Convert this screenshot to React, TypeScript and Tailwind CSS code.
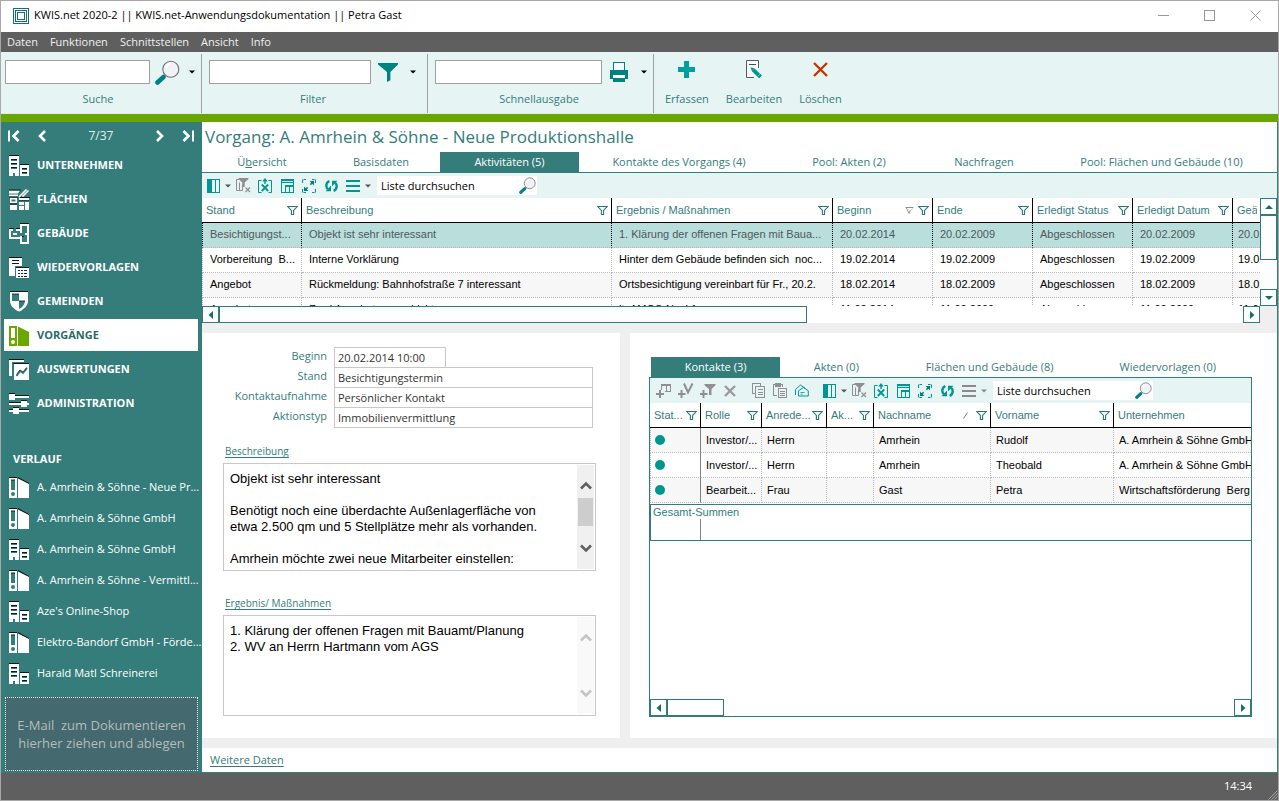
import React from "react";

type IconProps = { className?: string };

const TEAL = "#009694";
const DEEP = "#347d7b";
const GREY = "#8f8f8f";

/* ---------- Icons ---------- */

function AppLogo() {
  return (
    <svg width="16" height="16" viewBox="0 0 16 16" fill="none" stroke="#14706e" shapeRendering="crispEdges">
      <rect x="0.5" y="0.5" width="15" height="15" />
      <rect x="2.5" y="2.5" width="11" height="11" />
      <rect x="4.5" y="4.5" width="7" height="7" />
    </svg>
  );
}

function Magnifier({ className = "size-[25px]" }: IconProps) {
  return (
    <svg className={className} viewBox="0 0 25 25">
      <path d="M2.5 22.5 L8.5 17" stroke="#007f86" strokeWidth="4.6" strokeLinecap="round" />
      <circle cx="15.8" cy="9.2" r="8" fill="#f0f2f8" stroke="#707070" strokeWidth="1.1" />
      <path d="M11 8a5 5 0 0 1 4-4" stroke="#ffffff" strokeWidth="1.6" fill="none" />
    </svg>
  );
}

function Caret({ color = "#000000" }: { color?: string }) {
  return (
    <svg width="6" height="4" viewBox="0 0 6 4">
      <path d="M0 0.4h6L3 3.6z" fill={color} />
    </svg>
  );
}

function Funnel() {
  return (
    <svg width="20" height="19" viewBox="0 0 20 19">
      <path d="M0 0h20v1.6l-7.6 7.4v8.2L9 19V9L0 1.6z" fill="#00827f" />
    </svg>
  );
}

function Printer() {
  return (
    <svg width="18" height="20" viewBox="0 0 18 20" shapeRendering="crispEdges">
      <rect x="3.5" y="0.5" width="11" height="9" fill="#f2fbfb" stroke="#00827f" />
      <path d="M0 8h18v9h-3v-4H3v4H0z" fill="#00827f" />
      <rect x="3" y="13" width="12" height="3" fill="#ffffff" />
      <rect x="3" y="16" width="12" height="4" fill="#00827f" />
      <path d="M4 8h10v1H4z" fill="#00827f" />
    </svg>
  );
}

function Plus() {
  return (
    <svg width="17" height="17" viewBox="0 0 17 17" shapeRendering="crispEdges">
      <path d="M6 0h5v6h6v5h-6v6H6v-6H0V6h6z" fill="#00a09c" />
    </svg>
  );
}

function EditDoc() {
  return (
    <svg width="17" height="19" viewBox="0 0 17 19">
      <path d="M12.5 8V0.5H0.5v17H8" fill="#f7fdfd" stroke="#5a5a5a" />
      <path d="M3 4.5h7" stroke="#4a4a4a" />
      <path d="M4.5 7.2l4.2 1.4-2.6 2.8z" fill="#00968f" />
      <path d="M7.3 10l6.2 5.8" stroke="#00968f" strokeWidth="3.8" />
      <path d="M13 15.4l1.6 1.5" stroke="#00968f" strokeWidth="4" />
      <path d="M11.6 16.4l3-3" stroke="#c9eceb" strokeWidth="0.6" />
    </svg>
  );
}

function Cross() {
  return (
    <svg width="15" height="15" viewBox="0 0 15 15">
      <path d="M1 1l13 13M14 1L1 14" stroke="#c53500" strokeWidth="2.4" />
    </svg>
  );
}

function FilterGlyph() {
  return (
    <svg width="11" height="9" viewBox="0 0 11 9" className="shrink-0">
      <path d="M0.8 0.5h9.4L6.6 4.4v4.1H4.4V4.4z" fill="none" stroke="#2a7876" strokeWidth="1.1" />
    </svg>
  );
}

function ColumnsIcon() {
  return (
    <svg width="13" height="14" viewBox="0 0 13 14" shapeRendering="crispEdges">
      <rect x="0.5" y="0.5" width="12" height="13" fill="#e9f8f8" stroke={TEAL} />
      <rect width="5" height="14" fill={TEAL} />
      <path d="M8.5 0v14" stroke={TEAL} />
    </svg>
  );
}

function ClearFilterIcon() {
  return (
    <svg width="16" height="15" viewBox="0 0 16 15">
      <path d="M4 1.5H1.5v11h3v-8M4.5 12.5h3v-6" fill="none" stroke={GREY} />
      <path d="M3.5 0h10v1l-3.8 3.6V9H7.3V4.6L3.5 1z" fill={GREY} />
      <path d="M10.5 9.5l4.5 4.5M15 9.5L10.5 14" stroke={GREY} strokeWidth="1.2" />
    </svg>
  );
}

function ExportIcon() {
  return (
    <svg width="14" height="15" viewBox="0 0 14 15">
      <path d="M3.5 2.5h-3v12h3M10.5 2.5h3v12h-3" fill="none" stroke={TEAL} />
      <path d="M7 0l2.8 3.4H7.7V6H6.3V3.4H4.2z" fill={TEAL} />
      <path d="M3.8 6.5l6.4 6.5M10.2 6.5L3.8 13" stroke={TEAL} strokeWidth="1.8" />
    </svg>
  );
}

function LayoutIcon() {
  return (
    <svg width="13" height="14" viewBox="0 0 13 14" shapeRendering="crispEdges">
      <path d="M0.5 0v13.5H4" fill="none" stroke={TEAL} />
      <rect width="13" height="4" fill={TEAL} />
      <path d="M1 2.5h11" stroke="#bfe6e5" />
      <rect x="4.5" y="6.5" width="8" height="7" fill="none" stroke={TEAL} />
      <rect x="4" y="6" width="9" height="2" fill={TEAL} />
      <path d="M8.5 7v7M12.5 4v3" stroke={TEAL} />
    </svg>
  );
}

function ExpandIcon() {
  return (
    <svg width="14" height="14" viewBox="0 0 14 14">
      <path d="M0.5 4V0.5H4M13.5 10v3.5H10M0.5 10v3.5H4M13.5 4V0.5H10" fill="none" stroke={TEAL} strokeWidth="1.2" strokeDasharray="3.5 1" />
      <path d="M12 2v4.6L7.6 2zM2 12V7.4L6.4 12z" fill="#007f7c" />
      <path d="M11 3L8.4 5.6M3 11l2.6-2.6" stroke="#007f7c" strokeWidth="1.5" />
    </svg>
  );
}

function RefreshIcon() {
  return (
    <svg width="13" height="12" viewBox="0 0 13 12">
      <path d="M4.4 1.2C0.8 2.6 0.4 7.2 3 9.4" fill="none" stroke={TEAL} strokeWidth="2.4" />
      <path d="M0.6 11.2h5.4V5.4z" fill={TEAL} />
      <path d="M8.6 10.8c3.6-1.4 4-6 1.4-8.2" fill="none" stroke={TEAL} strokeWidth="2.4" />
      <path d="M12.4 0.8H7v5.8z" fill={TEAL} />
    </svg>
  );
}

function LinesIcon({ color }: { color: string }) {
  return (
    <svg width="14" height="14" viewBox="0 0 14 14" shapeRendering="crispEdges">
      <path d="M0 1h14v2H0zM0 6h14v2H0zM0 11h14v2H0z" fill={color} />
    </svg>
  );
}

function AddTableIcon() {
  return (
    <svg width="16" height="15" viewBox="0 0 16 15" shapeRendering="crispEdges">
      <path d="M5.5 7V1.5h9v7H9M5 2.5h10M10.5 1v8" fill="none" stroke={GREY} />
      <path d="M3 7h2v3h3v2H5v3H3v-3H0v-2h3z" fill={GREY} />
    </svg>
  );
}

function AddVIcon() {
  return (
    <svg width="16" height="15" viewBox="0 0 16 15">
      <path d="M6 0.5l4 9 4.5-9" fill="none" stroke={GREY} strokeWidth="2" />
      <path d="M2.5 7h2v3h3v2h-3v3h-2v-3H0v-2h2.5z" fill={GREY} />
    </svg>
  );
}

function AddFilterIcon() {
  return (
    <svg width="16" height="15" viewBox="0 0 16 15">
      <path d="M4.5 1h11v1.2l-4 3.8v6H9V6L4.5 2.2z" fill={GREY} />
      <path d="M2.5 7h2v3h3v2h-3v3h-2v-3H0v-2h2.5z" fill={GREY} />
    </svg>
  );
}

function DeleteIcon() {
  return (
    <svg width="12" height="12" viewBox="0 0 12 12">
      <path d="M1 1l10 10M11 1L1 11" stroke="#9a9a9a" strokeWidth="2.4" />
    </svg>
  );
}

function CopyIcon() {
  return (
    <svg width="13" height="15" viewBox="0 0 13 15" shapeRendering="crispEdges" fill="none" stroke={GREY}>
      <path d="M2.5 10.5h-2v-10h8v2" />
      <rect x="3.5" y="3.5" width="9" height="11" />
      <path d="M6 6.5h5M6 9.5h5M6 11.5h5" />
    </svg>
  );
}

function PasteIcon() {
  return (
    <svg width="14" height="15" viewBox="0 0 14 15" shapeRendering="crispEdges">
      <path d="M4 12.5H0.5v-11h9V4" fill="none" stroke={GREY} />
      <rect x="2" y="0" width="6" height="4" fill={GREY} />
      <rect x="5.5" y="5.5" width="8" height="9" fill="#e6f4f4" stroke={GREY} />
      <path d="M7 8.5h5M7 10.5h5M7 12.5h5" stroke={GREY} />
    </svg>
  );
}

function MailIcon() {
  return (
    <svg width="14" height="13" viewBox="0 0 14 13" fill="none" stroke={TEAL}>
      <path d="M0.5 11V5.5L5.5 1l5 3.5" />
      <path d="M3.5 12V6.8L8.5 3.4l4.8 3.4V12z" />
      <path d="M5.5 8.5h4M5.5 10.2h2" strokeWidth="0.8" />
    </svg>
  );
}

function CompanyIcon() {
  return (
    <svg width="20" height="21" viewBox="0 0 20 21" shapeRendering="crispEdges">
      <path d="M0 0h10v1H0zM11 9h9v1h-9z" fill="#101818" />
      <path d="M0 1h10v20H6v-3H4v3H0zM11 10h9v11h-9z" fill="#ffffff" />
      <path d="M2 4h6v1H2zM2 8h6v1H2zM2 12h6v1H2zM13 13h5v1h-5zM13 17h5v1h-5z" fill="#101818" />
      <path d="M2 5h6v1H2zM2 9h6v1H2zM2 13h6v1H2zM13 14h5v1h-5zM13 18h5v1h-5z" fill={DEEP} />
    </svg>
  );
}

function AreaIcon() {
  return (
    <svg width="21" height="21" viewBox="0 0 21 21">
      <path d="M0 1.5h11l-2 3H0zM0 5.5h9v2H0zM1 9h7v5H1zM10 9h10v2H10zM10 12.5h10v8.5H10zM1 16h7v5H1z" fill="#ffffff" />
      <path d="M0 1h12M0 8h9M11 8.5h10M1 15h7M10 12h10" stroke="#101818" />
      <path d="M2.5 10.5h4v2h-4z" fill={DEEP} />
      <path d="M10 8L17.5 0.5M13.5 7.5l6-6" stroke="#ffffff" strokeWidth="1.6" />
      <path d="M15.5 13v8M10 16.5h5" stroke={DEEP} />
    </svg>
  );
}

function BuildingIcon() {
  return (
    <svg width="20" height="21" viewBox="0 0 20 21" shapeRendering="crispEdges" fill="none">
      <path d="M11 0.5h9M0 5.5h5M7 5.5h4M11 13.5h4" stroke="#101818" />
      <path d="M4 7H1v8h11v5h7V2h-7v5H7M12 7v3M8 11H4M16 11h3M12 13v3" stroke="#ffffff" strokeWidth="2" />
    </svg>
  );
}

function FollowUpIcon() {
  return (
    <svg width="20" height="21" viewBox="0 0 20 21" shapeRendering="crispEdges">
      <path d="M0 0h13v1H0z" fill="#101818" />
      <path d="M0 1h13v8H6v10H0zM7 11h13v10H7z" fill="#ffffff" />
      <path d="M7 10h13v1H7zM3 3h7v1H3zM3 6h7v1H3z" fill="#101818" />
      <path d="M9 13h2v1H9zM12 13h2v1h-2zM15 13h3v1h-3zM9 16h2v1H9zM12 16h2v1h-2zM15 16h3v1h-3zM9 19h2v1H9zM12 19h2v1h-2zM15 19h3v1h-3z" fill="#0d3433" />
    </svg>
  );
}

function ShieldIcon() {
  return (
    <svg width="20" height="21" viewBox="0 0 20 21">
      <path d="M1 0h18v1H1z" fill="#101818" />
      <path d="M1 1h18v9c0 5-5 9-9 10.6C6 19 1 15 1 10z" fill="#ffffff" />
      <path d="M3 3h7v7H3zM10 10h6c-0.4 4-3 6.4-6 8z" fill={DEEP} />
      <path d="M3 3h7M10 10h6" stroke="#101818" strokeWidth="0.8" />
    </svg>
  );
}

function BinderIcon({ green = false }: { green?: boolean }) {
  const body = green ? "#6aa700" : "#ffffff";
  const hole = green ? "#ffffff" : DEEP;
  return (
    <svg width="20" height="21" viewBox="0 0 20 21">
      {!green && <path d="M0 0h8v1H0zM9 0l11 6v1.5L9 1.5z" fill="#101818" />}
      <path d="M0 1h8v20H0zM9 1.4L20 7v14H9z" fill={body} />
      <rect x="2" y="3" width="4" height="10" fill={hole} />
      {!green && <path d="M2 2.5h4v1H2z" fill="#101818" />}
      <circle cx="4" cy="17" r="2" fill={hole} />
    </svg>
  );
}

function ReportIcon() {
  return (
    <svg width="20" height="21" viewBox="0 0 20 21">
      <path d="M0 0h15v1H0zM4 4h16v1H4z" fill="#101818" />
      <path d="M0 1h15v2H3v14H0zM5 5h15v16H5z" fill="#ffffff" />
      <path d="M7.5 17l3.5-5 3 2 4-5" fill="none" stroke={DEEP} strokeWidth="2" />
      <path d="M7.5 15.5l3.5-4.6 3 2 4-4.6" fill="none" stroke="#101818" strokeWidth="0.6" />
    </svg>
  );
}

function SlidersIcon() {
  return (
    <svg width="20" height="21" viewBox="0 0 20 21" shapeRendering="crispEdges">
      <path d="M0 0h6v1H0zM6 2h14v1H6zM0 9h12v1H0zM12 7h6v1h-6zM0 16h4v1H0zM4 14h6v1H4zM10 16h10v1H10z" fill="#101818" />
      <path d="M0 1h6v6H0zM6 3h14v2H6zM0 10h12v2H0zM12 8h6v6h-6zM18 10h2v2h-2zM0 17h4v2H0zM4 15h6v6H4zM10 17h10v2H10z" fill="#ffffff" />
    </svg>
  );
}

function PagerIcon({ kind }: { kind: "first" | "prev" | "next" | "last" }) {
  const flip = kind === "next" || kind === "last";
  const bar = kind === "first" || kind === "last";
  return (
    <svg width="12" height="12" viewBox="0 0 12 12" className={flip ? "-scale-x-100" : ""}>
      {bar && <path d="M1 0.5v11" stroke="#ffffff" strokeWidth="2" />}
      <path d={bar ? "M10.5 1L5.5 6l5 5" : "M9 1L4 6l5 5"} fill="none" stroke="#ffffff" strokeWidth="2.6" />
    </svg>
  );
}

function Triangle({ dir }: { dir: "left" | "right" | "up" | "down" }) {
  const d = {
    left: "M6 0v8L1.5 4z",
    right: "M2 0v8l4.5-4z",
    up: "M0 6h8L4 2z",
    down: "M0 2h8L4 6z",
  }[dir];
  return (
    <svg width="8" height="8" viewBox="0 0 8 8">
      <path d={d} fill="#14706e" />
    </svg>
  );
}

function Chevron({ up = false, color }: { up?: boolean; color: string }) {
  return (
    <svg width="12" height="9" viewBox="0 0 12 9">
      <path d={up ? "M1 7.5L6 2.5l5 5" : "M1 1.5l5 5 5-5"} fill="none" stroke={color} strokeWidth="2.6" />
    </svg>
  );
}

/* ---------- Shared pieces ---------- */

function IconButton({ label, children }: { label: string; children: React.ReactNode }) {
  return (
    <button type="button" aria-label={label} className="flex h-[22px] w-[22px] shrink-0 items-center justify-center">
      {children}
    </button>
  );
}

function MenuCaret({ label, color = "#555555" }: { label: string; color?: string }) {
  return (
    <button type="button" aria-label={label} className="flex h-[22px] w-2 shrink-0 items-center justify-center">
      <Caret color={color} />
    </button>
  );
}

function ListTools({ name, muted = false }: { name: string; muted?: boolean }) {
  return (
    <>
      <IconButton label="Spalten"><ColumnsIcon /></IconButton>
      <MenuCaret label="Spaltenmenü" />
      <IconButton label="Filter entfernen"><ClearFilterIcon /></IconButton>
      <IconButton label="Excel-Export"><ExportIcon /></IconButton>
      <IconButton label="Layout"><LayoutIcon /></IconButton>
      <IconButton label="Vergrößern"><ExpandIcon /></IconButton>
      <IconButton label="Aktualisieren"><RefreshIcon /></IconButton>
      <IconButton label="Menü"><LinesIcon color={muted ? "#8a8a8a" : TEAL} /></IconButton>
      <MenuCaret label="Menü öffnen" color={muted ? "#8a8a8a" : "#555555"} />
      <div className="ml-[5px] flex h-[19px] w-40 items-center bg-white pr-px pl-1">
        <input
          aria-label={name}
          defaultValue="Liste durchsuchen"
          className="w-0 flex-1 bg-transparent text-[11px] leading-4 text-black outline-none"
        />
        <Magnifier className="size-[17px]" />
      </div>
    </>
  );
}

function ScrollButton({ dir }: { dir: "left" | "right" | "up" | "down" }) {
  return (
    <button
      type="button"
      aria-label={`Scrollen ${dir}`}
      className="flex size-[17px] shrink-0 items-center justify-center border border-[#2f7c7a] bg-white"
    >
      <Triangle dir={dir} />
    </button>
  );
}

type Column = { label: string; width?: string; sort?: "down" | "up"; filter?: boolean };

function HeadCell({ col }: { col: Column }) {
  return (
    <th
      scope="col"
      className={`h-[25px] overflow-hidden border-b border-black p-0 font-normal ${col.width ? "border-r" : ""}`}
    >
      <div className="flex items-center pr-[3px] pl-1 text-[#347d7b]">
        <span className="flex-1 overflow-hidden text-left whitespace-nowrap">{col.label}</span>
        {col.sort === "down" && (
          <svg width="9" height="7" viewBox="0 0 9 7" className="mr-1 shrink-0">
            <path d="M0.5 0.5h8M1.5 1l2.5 5.5L5.500 3" fill="none" stroke="#909090" />
            <path d="M7.500 1.500L6.500 3" stroke="#c4c4c4" />
          </svg>
        )}
        {col.sort === "up" && (
          <svg width="5" height="7" viewBox="0 0 5 7" className="mr-2 shrink-0">
            <path d="M4.5 0.5l-4 6" fill="none" stroke="#808080" />
          </svg>
        )}
        {col.filter !== false && <FilterGlyph />}
      </div>
    </th>
  );
}

/* ---------- Data ---------- */

const activityColumns: Column[] = [
  { label: "Stand", width: "w-[100px]" },
  { label: "Beschreibung", width: "w-[310px]" },
  { label: "Ergebnis / Maßnahmen", width: "w-[221px]" },
  { label: "Beginn", width: "w-[100px]", sort: "down" },
  { label: "Ende", width: "w-[100px]" },
  { label: "Erledigt Status", width: "w-[100px]" },
  { label: "Erledigt Datum", width: "w-[100px]" },
  { label: "Geändert", filter: false },
];

const activities = [
  ["Besichtigungst...", "Objekt ist sehr interessant", "1. Klärung der offenen Fragen mit Baua...", "20.02.2014", "20.02.2009", "Abgeschlossen", "20.02.2009", "20.02.2009"],
  ["Vorbereitung  B...", "Interne Vorklärung", "Hinter dem Gebäude befinden sich  noc...", "19.02.2014", "19.02.2009", "Abgeschlossen", "19.02.2009", "19.02.2009"],
  ["Angebot", "Rückmeldung: Bahnhofstraße 7 interessant", "Ortsbesichtigung vereinbart für Fr., 20.2.", "18.02.2014", "18.02.2009", "Abgeschlossen", "18.02.2009", "18.02.2009"],
  ["Angebot", "Zwei Angebote verschickt", "lt. AMGS-Nachfrage", "11.02.2014", "11.02.2009", "Abgeschlossen", "11.02.2009", "11.02.2009"],
];

const contactColumns: Column[] = [
  { label: "Stat...", width: "w-[51px]" },
  { label: "Rolle", width: "w-[61px]" },
  { label: "Anrede...", width: "w-[65px]" },
  { label: "Ak...", width: "w-[47px]" },
  { label: "Nachname", width: "w-[117px]", sort: "up" },
  { label: "Vorname", width: "w-[123px]" },
  { label: "Unternehmen", filter: false },
];

const contacts = [
  ["Investor/...", "Herrn", "", "Amrhein", "Rudolf", "A. Amrhein & Söhne GmbH"],
  ["Investor/...", "Herrn", "", "Amrhein", "Theobald", "A. Amrhein & Söhne GmbH"],
  ["Bearbeit...", "Frau", "", "Gast", "Petra", "Wirtschaftsförderung  Berg"],
];

const navItems = [
  { label: "UNTERNEHMEN", icon: <CompanyIcon /> },
  { label: "FLÄCHEN", icon: <AreaIcon /> },
  { label: "GEBÄUDE", icon: <BuildingIcon /> },
  { label: "WIEDERVORLAGEN", icon: <FollowUpIcon /> },
  { label: "GEMEINDEN", icon: <ShieldIcon /> },
  { label: "VORGÄNGE", icon: <BinderIcon green />, active: true },
  { label: "AUSWERTUNGEN", icon: <ReportIcon /> },
  { label: "ADMINISTRATION", icon: <SlidersIcon /> },
];

const historyItems = [
  { label: "A. Amrhein & Söhne - Neue Pr...", icon: <BinderIcon /> },
  { label: "A. Amrhein & Söhne GmbH", icon: <BinderIcon /> },
  { label: "A. Amrhein & Söhne GmbH", icon: <CompanyIcon /> },
  { label: "A. Amrhein & Söhne - Vermittl...", icon: <BinderIcon /> },
  { label: "Aze's Online-Shop", icon: <CompanyIcon /> },
  { label: "Elektro-Bandorf GmbH - Förde...", icon: <BinderIcon /> },
  { label: "Harald Matl Schreinerei", icon: <CompanyIcon /> },
];

const mainTabs: { label: React.ReactNode; active?: boolean }[] = [
  { label: <>Ü<u>b</u>ersicht</> },
  { label: "Basisdaten" },
  { label: "Aktivitäten (5)", active: true },
  { label: "Kontakte des Vorgangs (4)" },
  { label: "Pool: Akten (2)" },
  { label: "Nachfragen" },
  { label: "Pool: Flächen und Gebäude (10)" },
];

const detailTabs = [
  { label: "Kontakte (3)", active: true },
  { label: "Akten (0)" },
  { label: "Flächen und Gebäude (8)" },
  { label: "Wiedervorlagen (0)" },
];

const fields = [
  { id: "beginn", label: "Beginn", value: "20.02.2014 10:00", width: "w-28" },
  { id: "stand", label: "Stand", value: "Besichtigungstermin", width: "w-[259px]" },
  { id: "kontaktaufnahme", label: "Kontaktaufnahme", value: "Persönlicher Kontakt", width: "w-[259px]" },
  { id: "aktionstyp", label: "Aktionstyp", value: "Immobilienvermittlung", width: "w-[259px]" },
];

/* ---------- Regions ---------- */

function TitleBar() {
  return (
    <header className="flex h-[31px] items-center bg-white pb-0.5 pl-3">
      <AppLogo />
      <h1 className="ml-[5px] flex-1 text-[11px] text-black">KWIS.net 2020-2 || KWIS.net-Anwendungsdokumentation || Petra Gast</h1>
      <div className="flex">
        <button type="button" aria-label="Minimieren" className="flex h-7 w-[46px] items-center justify-center">
          <svg width="11" height="11" viewBox="0 0 11 11"><path d="M0 5.5h11" stroke="#999999" /></svg>
        </button>
        <button type="button" aria-label="Maximieren" className="flex h-7 w-[46px] items-center justify-center">
          <svg width="11" height="11" viewBox="0 0 11 11"><rect x="0.5" y="0.5" width="10" height="10" fill="none" stroke="#999999" /></svg>
        </button>
        <button type="button" aria-label="Schließen" className="flex h-7 w-[46px] items-center justify-center">
          <svg width="11" height="11" viewBox="0 0 11 11"><path d="M0.5 0.5l10 10M10.5 0.5l-10 10" stroke="#999999" /></svg>
        </button>
      </div>
    </header>
  );
}

function MenuBar() {
  return (
    <nav className="flex h-5 items-center gap-3 bg-[#5f5f5f] pl-1.5 text-[11px] text-[#f0f0f0]">
      {["Daten", "Funktionen", "Schnittstellen", "Ansicht", "Info"].map((m) => (
        <button key={m} type="button">{m}</button>
      ))}
    </nav>
  );
}

function SearchGroup({ id, label, width, input, icon, action }: { id: string; label: string; width: string; input: string; icon: React.ReactNode; action: string }) {
  return (
    <div className={`shrink-0 border-r border-[#a0a0a0] pt-1.5 ${width}`}>
      <div className="flex h-6 items-center">
        <input id={id} type="text" className={`h-6 border border-[#a0a0a0] bg-white px-1 text-xs outline-none ${input}`} />
        <button type="button" aria-label={action} className="ml-1 flex h-6 w-[26px] shrink-0 items-center justify-center">{icon}</button>
        <button type="button" aria-label={`${label} Optionen`} className="ml-1.5 flex h-6 w-3 shrink-0 items-center justify-center"><Caret /></button>
      </div>
      <label htmlFor={id} className="mt-1.5 block pr-2.5 text-center text-[11px] leading-[18px] text-[#347d7b]">{label}</label>
    </div>
  );
}

function Ribbon() {
  return (
    <div className="flex h-[62px] border-b border-[#d8f0e8] bg-[#e6f4f4] pt-0.5">
      <SearchGroup id="suche" label="Suche" action="Suchen" width="w-[201px] pl-1" input="w-[145px]" icon={<Magnifier />} />
      <SearchGroup id="filter" label="Filter" action="Filtern" width="w-[226px] pl-[7px]" input="w-[162px]" icon={<Funnel />} />
      <SearchGroup id="ausgabe" label="Schnellausgabe" action="Drucken" width="w-[226px] pl-[7px]" input="w-[167px]" icon={<Printer />} />
      <div className="flex gap-[17px] pt-[5px] pl-[11px] text-[11px] text-[#347d7b]">
        {[
          { label: "Erfassen", icon: <Plus /> },
          { label: "Bearbeiten", icon: <EditDoc /> },
          { label: "Löschen", icon: <Cross /> },
        ].map((b) => (
          <button key={b.label} type="button" className="flex flex-col items-center">
            <span className="flex h-5 items-center">{b.icon}</span>
            <span className="mt-[11px] leading-[18px]">{b.label}</span>
          </button>
        ))}
      </div>
    </div>
  );
}

function Sidebar() {
  return (
    <aside className="flex w-[201px] shrink-0 flex-col bg-[#347d7b] text-white">
      <div className="flex h-[27px] items-center pr-2 pl-[7px]">
        <button type="button" aria-label="Erster"><PagerIcon kind="first" /></button>
        <button type="button" aria-label="Vorheriger" className="ml-4"><PagerIcon kind="prev" /></button>
        <span className="flex-1 text-center text-xs text-[#e0eeee]">7/37</span>
        <button type="button" aria-label="Nächster" className="mr-4"><PagerIcon kind="next" /></button>
        <button type="button" aria-label="Letzter"><PagerIcon kind="last" /></button>
      </div>
      <nav className="flex flex-col gap-0.5 pr-1 pl-[3px]">
        {navItems.map((n) => (
          <a
            key={n.label}
            href="#"
            className={`flex h-8 items-center pl-[5px] text-[11px] font-bold ${n.active ? "bg-white text-[#2c6a6a]" : "text-white"}`}
          >
            <span className="w-7 shrink-0">{n.icon}</span>
            {n.label}
          </a>
        ))}
      </nav>
      <h2 className="mt-[31px] pl-3 text-[11px] leading-[18px] font-bold">VERLAUF</h2>
      <ul className="mt-1 text-[11px]">
        {historyItems.map((h, i) => (
          <li key={i}>
            <a href="#" className="flex h-[31px] items-center pl-2 whitespace-nowrap">
              <span className="w-7 shrink-0">{h.icon}</span>
              {h.label}
            </a>
          </li>
        ))}
      </ul>
      <div className="mx-1 mt-2 mb-0.5 flex min-h-[74px] flex-1 items-center justify-center border border-dotted border-white bg-[#44696f] text-center text-[13px] leading-[18px] whitespace-pre text-[#b5bcbc]">
        {"E-Mail  zum Dokumentieren\nhierher ziehen und ablegen"}
      </div>
    </aside>
  );
}

function ActivityList() {
  return (
    <section className="flex shrink-0 flex-col bg-white">
      <div className="flex h-[25px] items-center bg-[#e6f4f4]">
        <ListTools name="Aktivitäten durchsuchen" />
      </div>
      <div className="flex">
        <div className="h-[108px] w-0 flex-1 overflow-hidden">
          <table className="w-full table-fixed border-separate border-spacing-0 font-['Liberation_Sans',sans-serif] text-[11px] leading-[22px]">
            <colgroup>
              {activityColumns.map((c) => <col key={c.label} className={c.width} />)}
            </colgroup>
            <thead>
              <tr>{activityColumns.map((c) => <HeadCell key={c.label} col={c} />)}</tr>
            </thead>
            <tbody>
              {activities.map((row, r) => (
                <tr key={r} className={r === 0 ? "bg-[#badedc] text-[#4d5a5a]" : r === 2 ? "bg-[#f7f7f7] text-black" : "text-black"}>
                  {row.map((cell, c) => (
                    <td
                      key={c}
                      className={`h-[25px] overflow-hidden border-r border-b border-dotted p-0 pl-[7px] align-top whitespace-pre first:border-l last:border-r-0 last:pl-[5px] ${r === 0 ? "border-r-black border-b-[#b8b8b8] border-l-black" : "border-[#b8b8b8]"}`}
                    >
                      {cell}
                    </td>
                  ))}
                </tr>
              ))}
            </tbody>
          </table>
        </div>
        <div className="flex w-[17px] flex-col">
          <ScrollButton dir="up" />
          <div className="h-[45px] border border-[#2f7c7a] bg-white" />
          <div className="flex-1" />
          <ScrollButton dir="down" />
        </div>
      </div>
      <div className="flex h-[17px]">
        <ScrollButton dir="left" />
        <div className="w-[588px] border border-[#2f7c7a]" />
        <div className="flex-1" />
        <ScrollButton dir="right" />
        <div className="w-[17px] bg-[#efefef]" />
      </div>
    </section>
  );
}

function NoteBox({ id, label, value, rows, scroll }: { id: string; label: string; value: string; rows: string; scroll: boolean }) {
  return (
    <div>
      <label htmlFor={id} className="ml-0.5 block w-max text-[10px] leading-4 text-[#347d7b] underline underline-offset-2">{label}</label>
      <div className={`mt-1 flex w-[373px] border border-[#c8c8c8] p-px ${rows}`}>
        <textarea
          id={id}
          readOnly
          defaultValue={value}
          className="flex-1 resize-none overflow-hidden bg-transparent pt-1.5 pl-[5px] font-['Liberation_Sans',sans-serif] text-[13px] leading-4 text-black outline-none"
        />
        <div className={`flex w-[17px] flex-col items-center py-4 ${scroll ? "bg-[#f0f0f0]" : "bg-[#f9f9f9]"}`}>
          <Chevron up color={scroll ? "#606060" : "#c4c4c4"} />
          <div className="mt-2 h-7 w-[15px]">{scroll && <div className="h-full bg-[#cdcdcd]" />}</div>
          <div className="flex-1" />
          <Chevron color={scroll ? "#606060" : "#c4c4c4"} />
        </div>
      </div>
    </div>
  );
}

function DetailForm() {
  return (
    <section className="w-[418px] shrink-0 bg-white pt-3.5 pl-[21px]">
      <div>
        {fields.map((f) => (
          <div key={f.id} className="flex h-5 items-start text-[11px]">
            <label htmlFor={f.id} className="w-[104px] text-right leading-[18px] text-[#347d7b]">{f.label}</label>
            <input
              id={f.id}
              readOnly
              defaultValue={f.value}
              className={`ml-[7px] h-[21px] border border-[#c8c8c8] bg-white px-[3px] leading-[18px] text-[#333333] outline-none ${f.width}`}
            />
          </div>
        ))}
      </div>
      <div className="mt-4 flex flex-col gap-6">
        <NoteBox
          id="beschreibung"
          label="Beschreibung"
          rows="h-[108px]"
          scroll
          value={"Objekt ist sehr interessant\n\nBenötigt noch eine überdachte Außenlagerfläche von\netwa 2.500 qm und 5 Stellplätze mehr als vorhanden.\n\nAmrhein möchte zwei neue Mitarbeiter einstellen:"}
        />
        <NoteBox
          id="ergebnis"
          label="Ergebnis/ Maßnahmen"
          rows="h-[101px]"
          scroll={false}
          value={"1. Klärung der offenen Fragen mit Bauamt/Planung\n2. WV an Herrn Hartmann vom AGS"}
        />
      </div>
    </section>
  );
}

function ContactPanel() {
  return (
    <section className="flex w-0 flex-1 flex-col bg-white pt-6 pr-[25px] pb-[21px] pl-[19px]">
      <div role="tablist" className="grid h-5 grid-cols-[129fr_112fr_194fr_162fr] pr-[3px] pl-0.5 text-[11px] text-[#347d7b]">
        {detailTabs.map((t) => (
          <button key={t.label} type="button" role="tab" aria-selected={!!t.active} className={`whitespace-nowrap ${t.active ? "bg-[#347d7b] text-white" : ""}`}>
            {t.label}
          </button>
        ))}
      </div>
      <div className="flex flex-1 flex-col border border-[#347d7b]">
        <div className="flex h-[25px] shrink-0 items-center bg-[#e6f4f4] pl-[3px]">
          <IconButton label="Zuordnen"><AddTableIcon /></IconButton>
          <IconButton label="Vorgang zuordnen"><AddVIcon /></IconButton>
          <IconButton label="Filter zuordnen"><AddFilterIcon /></IconButton>
          <IconButton label="Entfernen"><DeleteIcon /></IconButton>
          <div className="ml-1.5 flex">
            <IconButton label="Kopieren"><CopyIcon /></IconButton>
            <IconButton label="Einfügen"><PasteIcon /></IconButton>
            <IconButton label="E-Mail"><MailIcon /></IconButton>
          </div>
          <div className="ml-[5px] flex items-center">
            <ListTools name="Kontakte durchsuchen" muted />
          </div>
        </div>
        <table className="w-full table-fixed border-separate border-spacing-0 font-['Liberation_Sans',sans-serif] text-[11px] leading-4 text-black">
          <colgroup>
            {contactColumns.map((c) => <col key={c.label} className={c.width} />)}
          </colgroup>
          <thead>
            <tr>{contactColumns.map((c) => <HeadCell key={c.label} col={c} />)}</tr>
          </thead>
          <tbody>
            {contacts.map((row, r) => (
              <tr key={r} className={r === 1 ? "" : "bg-[#f7f7f7]"}>
                <td className="h-[25px] border-r border-b border-l border-dotted border-[#b8b8b8] [border-right:1px_solid_#808080] p-0 pl-1">
                  <span className="block size-2.5 rounded-full bg-[#009690]" />
                </td>
                {row.map((cell, c) => (
                  <td key={c} className="h-[25px] overflow-hidden border-r border-b border-dotted border-[#b8b8b8] p-0 pl-[5px] whitespace-pre last:border-r-0">
                    {cell}
                  </td>
                ))}
              </tr>
            ))}
          </tbody>
        </table>
        <div className="mt-px flex h-[37px] flex-col border border-r-0 border-[#347d7b] pl-0.5 font-['Liberation_Sans',sans-serif] text-[11px] leading-[14px] text-[#347d7b]">
          Gesamt-Summen
          <div className="w-12 flex-1 border-r border-[#808080]" />
        </div>
        <div className="flex-1" />
        <div className="flex h-[17px]">
          <ScrollButton dir="left" />
          <div className="w-[57px] border border-[#2f7c7a]" />
          <div className="flex-1" />
          <ScrollButton dir="right" />
        </div>
      </div>
    </section>
  );
}

export default function App() {
  return (
    <div className="flex min-h-screen flex-col border border-[#a8a8a8] bg-white font-['Open_Sans','Noto_Sans',sans-serif]">
      <TitleBar />
      <MenuBar />
      <Ribbon />
      <div className="h-2 bg-[#6ba500]" />
      <div className="flex flex-1">
        <Sidebar />
        <main className="flex w-0 flex-1 flex-col border-r border-b border-[#347d7b]">
          <h2 className="h-[30px] pl-[3px] text-[17px] leading-[30px] text-[#347d7b]">Vorgang: A. Amrhein &amp; Söhne - Neue Produktionshalle</h2>
          <div role="tablist" className="grid h-[21px] grid-cols-[120fr_118fr_139fr_200fr_140fr_130fr_225fr] border-b border-[#347d7b] pr-[3px] text-[11px] text-[#347d7b]">
            {mainTabs.map((t, i) => (
              <button key={i} type="button" role="tab" aria-selected={!!t.active} className={`whitespace-nowrap ${t.active ? "bg-[#347d7b] text-white" : ""}`}>
                {t.label}
              </button>
            ))}
          </div>
          <ActivityList />
          <div className="flex flex-1 gap-2.5 bg-[#efefef] py-2.5">
            <DetailForm />
            <ContactPanel />
          </div>
          <div className="flex h-6 items-center bg-white pt-px pl-2 text-[11px]">
            <a href="#" className="text-[#347d7b] underline underline-offset-2">Weitere Daten</a>
          </div>
        </main>
      </div>
      <footer className="flex h-[27px] items-center justify-end bg-[#5f5f5f] text-[11px] text-white">
        14:34
        <svg width="10" height="10" viewBox="0 0 10 10" className="ml-4 self-end">
          <path d="M9.5 0.5l-9 9M9.5 3.5l-6 6M9.5 6.5l-3 3" stroke="#a8a8a8" />
        </svg>
      </footer>
    </div>
  );
}
